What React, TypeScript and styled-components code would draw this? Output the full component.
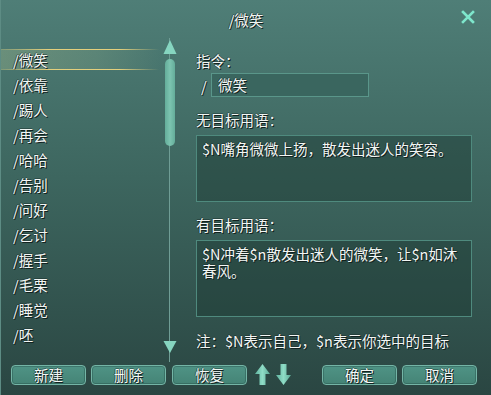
import React, { useState } from 'react'
import styled, { createGlobalStyle } from 'styled-components'

const Global = createGlobalStyle`
  html, body { margin: 0; padding: 0; }
  body {
    font-family: "Noto Sans CJK SC", "Noto Sans", sans-serif;
    background: #223936;
  }
`

const Window = styled.div`
  width: 491px;
  height: 395px;
  box-sizing: border-box;
  display: flex;
  flex-direction: column;
  background: linear-gradient(180deg, #4f7e77 0%, #3d665f 45%, #2a4642 100%);
  border-left: 1px solid #5d8c84;
  color: #f2f6f4;
  font-size: 14.5px;
  overflow: hidden;
`

const shadow = `1px 1px 0 #12221f, -1px 0 0 rgba(18,34,31,0.5), 0 -1px 0 rgba(18,34,31,0.4)`

const TitleBar = styled.div`
  height: 38px;
  display: flex;
  align-items: center;
  justify-content: center;
  position: relative;
  text-shadow: ${shadow};
`

const Close = styled.button`
  position: absolute;
  right: 16px;
  top: 10px;
  width: 14px;
  height: 14px;
  padding: 0;
  border: 0;
  background: none;
  display: flex;
`

const Body = styled.div`
  flex: 1;
  display: flex;
  min-height: 0;
`

const List = styled.ul`
  list-style: none;
  margin: 0;
  padding: 11px 0 0 0;
  width: 160px;
  display: flex;
  flex-direction: column;
  gap: 4px;
`

const Item = styled.li<{ $selected?: boolean }>`
  height: 21px;
  line-height: 21px;
  padding-left: 12px;
  position: relative;
  text-shadow: ${shadow};
  cursor: pointer;
  background: ${p => p.$selected
    ? 'linear-gradient(90deg, rgba(190,205,150,0.28) 0%, rgba(170,195,150,0.18) 60%, rgba(170,195,150,0) 100%)'
    : 'transparent'};
  &::before, &::after {
    content: '';
    display: ${p => (p.$selected ? 'block' : 'none')};
    position: absolute;
    left: 0;
    width: 158px;
    height: 1px;
    background: linear-gradient(90deg, rgba(220,200,110,0.2) 0%, #e3cf7c 30%, #e3cf7c 75%, rgba(227,207,124,0) 100%);
  }
  &::before { top: 0; }
  &::after { bottom: 0; }
`

const ScrollCol = styled.div`
  width: 20px;
  margin-left: -1px;
  position: relative;
  display: flex;
  flex-direction: column;
  align-items: center;
  padding-top: 2px;
  &::before {
    content: '';
    position: absolute;
    left: 9px;
    top: 0;
    bottom: 0;
    width: 1px;
    background: #6f9d95;
  }
`

const Thumb = styled.div`
  width: 10px;
  height: 87px;
  margin-top: 3px;
  border-radius: 5px;
  background: linear-gradient(90deg, #64ad9a, #7cc4b0 50%, #64ad9a);
  position: relative;
`

const Spacer = styled.div`
  flex: 1;
`

const ArrowTri = styled.svg<{ $mb?: number }>`
  position: relative;
  display: block;
  margin-bottom: ${p => p.$mb ?? 0}px;
`

const Right = styled.div`
  flex: 1;
  padding: 11px 19px 0 16px;
  display: flex;
  flex-direction: column;
`

const Label = styled.div<{ $mt?: number }>`
  height: 24px;
  line-height: 24px;
  margin-top: ${p => p.$mt ?? 0}px;
  text-shadow: ${shadow};
`

const CmdRow = styled.div`
  display: flex;
  align-items: center;
  height: 24px;
`

const Slash = styled.span`
  width: 15px;
  padding-left: 5px;
  box-sizing: border-box;
  text-shadow: ${shadow};
`

const Input = styled.div`
  width: 158px;
  height: 24px;
  box-sizing: border-box;
  border: 1px solid #5a968a;
  background: #3a665f;
  padding-left: 6px;
  line-height: 22px;
  text-shadow: ${shadow};
`

const TextBox = styled.div<{ $h: number }>`
  margin-top: 3px;
  height: ${p => p.$h}px;
  box-sizing: border-box;
  border: 1px solid #4f8a7e;
  background: rgba(28, 58, 52, 0.45);
  padding: 4px 5px;
  line-height: 17px;
  text-shadow: ${shadow};
`

const Note = styled.div`
  margin-top: 12px;
  height: 24px;
  line-height: 24px;
  text-shadow: ${shadow};
`

const Footer = styled.div`
  height: 33px;
  display: flex;
  align-items: flex-start;
  padding: 3px 0 0 10px;
  box-sizing: border-box;
`

const Btn = styled.button<{ $ml?: number }>`
  width: 75px;
  height: 20px;
  margin-left: ${p => p.$ml ?? 0}px;
  padding: 0;
  border: 1px solid #74b5a6;
  border-radius: 4px;
  background: linear-gradient(180deg, #4f9385 0%, #458476 100%);
  box-shadow: inset 0 0 0 1px rgba(30, 70, 62, 0.35);
  color: #f4f8f6;
  font-family: "Noto Sans CJK SC", sans-serif;
  font-size: 14.5px;
  line-height: 18px;
  text-shadow: ${shadow};
  cursor: pointer;
`

const Arrows = styled.div`
  display: flex;
  gap: 4px;
  margin-left: 7px;
  margin-top: -2px;
`

const names = ['微笑', '依靠', '踢人', '再会', '哈哈', '告别', '问好', '乞讨', '握手', '毛栗', '睡觉', '呸']

function BigArrow({ down }: { down?: boolean }) {
  return (
    <svg width="17" height="23" viewBox="0 0 17 23">
      <defs>
        <linearGradient id={down ? 'ad' : 'au'} x1="0" x2="1" y1="0" y2="0">
          <stop offset="0" stopColor="#5fb39f" />
          <stop offset="0.5" stopColor="#8fdcc6" />
          <stop offset="1" stopColor="#5aa895" />
        </linearGradient>
      </defs>
      <path
        d={down
          ? 'M5.5 1 H11.5 V12 H16 L8.5 22 L1 12 H5.5 Z'
          : 'M8.5 1 L16 11 H11.5 V22 H5.5 V11 H1 Z'}
        fill={`url(#${down ? 'ad' : 'au'})`}
      />
    </svg>
  )
}

export default function App() {
  const [selected, setSelected] = useState('微笑')

  return (
    <>
      <Global />
      <Window>
        <TitleBar>
          /{selected}
          <Close aria-label="关闭">
            <svg width="14" height="14" viewBox="0 0 14 14">
              <path d="M2 2 L12 12 M12 2 L2 12" stroke="#7ee6cc" strokeWidth="2.6" strokeLinecap="square" />
            </svg>
          </Close>
        </TitleBar>
        <Body>
          <List>
            {names.map(n => (
              <Item key={n} $selected={n === selected} onClick={() => setSelected(n)}>
                /{n}
              </Item>
            ))}
          </List>
          <ScrollCol>
            <ArrowTri width="14" height="16" viewBox="0 0 14 16">
              <path d="M7 0 L13.5 14 H0.5 Z" fill="#86d5c0" />
            </ArrowTri>
            <Thumb />
            <Spacer />
            <ArrowTri width="14" height="13" viewBox="0 0 14 13" $mb={8}>
              <path d="M0.5 0 H13.5 L7 12 Z" fill="#86d5c0" />
            </ArrowTri>
          </ScrollCol>
          <Right>
            <Label>指令：</Label>
            <CmdRow>
              <Slash>/</Slash>
              <Input>{selected}</Input>
            </CmdRow>
            <Label $mt={11}>无目标用语：</Label>
            <TextBox $h={67}>$N嘴角微微上扬，散发出迷人的笑容。</TextBox>
            <Label $mt={11}>有目标用语：</Label>
            <TextBox $h={77}>
              $N冲着$n散发出迷人的微笑，让$n如沐
              <br />
              春风。
            </TextBox>
            <Note>注：$N表示自己，$n表示你选中的目标</Note>
          </Right>
        </Body>
        <Footer>
          <Btn>新建</Btn>
          <Btn $ml={5}>删除</Btn>
          <Btn $ml={6}>恢复</Btn>
          <Arrows>
            <BigArrow />
            <BigArrow down />
          </Arrows>
          <Btn $ml={30}>确定</Btn>
          <Btn $ml={5}>取消</Btn>
        </Footer>
      </Window>
    </>
  )
}
